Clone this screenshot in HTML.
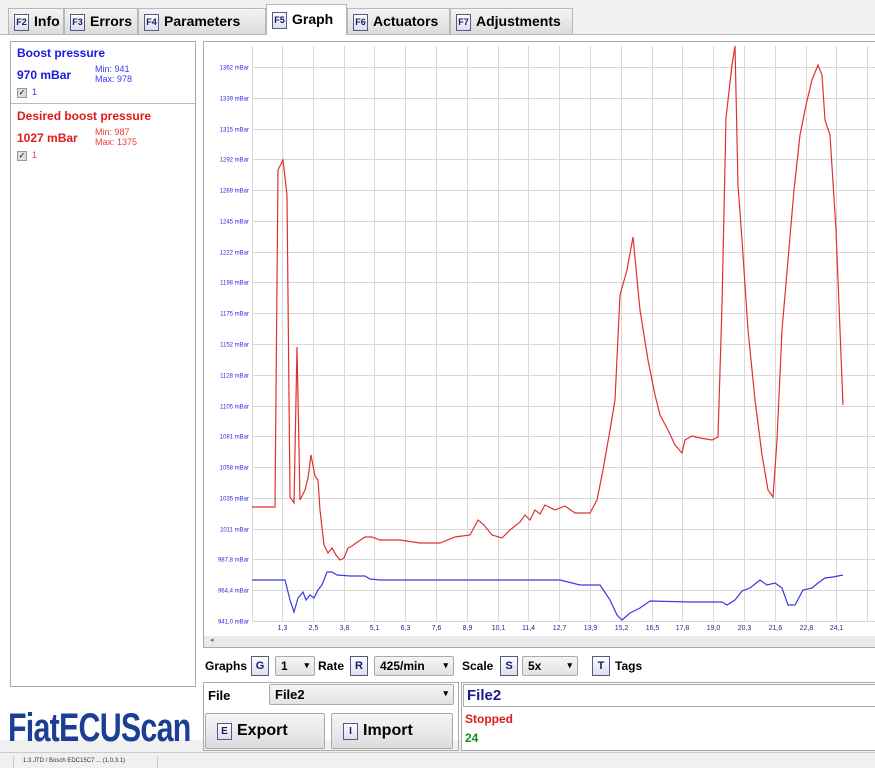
<!DOCTYPE html>
<html><head><meta charset="utf-8"><style>
*{box-sizing:border-box}
body{margin:0;width:875px;height:768px;overflow:hidden;background:#f0f0f0;font-family:"Liberation Sans",Arial,sans-serif;position:relative}
.a{position:absolute}
.tab{position:absolute;top:8px;height:26px;border:1px solid #b8b8b8;border-bottom:none;background:linear-gradient(#f4f4f4,#dcdcdc);font-weight:bold;font-size:14px;padding:4px 0 0 5px;white-space:nowrap;overflow:hidden}
.k{display:inline-block;border:1px solid #555a80;background:linear-gradient(#fff,#dde);color:#1a1a6a;font-size:9px;font-weight:bold;width:15px;height:17px;text-align:center;line-height:15px;margin-right:5px;vertical-align:1px}
.btn{position:absolute;border:1px solid #aaa;border-radius:2px;background:linear-gradient(#f6f6f6,#dcdcdc);font-weight:bold}
.sel{position:absolute;border:1px solid #aaa;border-radius:2px;background:linear-gradient(#f6f6f6,#e2e2e2);font-size:12px;font-weight:bold;padding:2px 5px}
.sel:after{content:"▾";position:absolute;right:5px;top:3px;font-size:9px}
.lbl{position:absolute;font-size:12px;font-weight:bold}
</style></head><body>
<div class="a" style="left:0;top:34px;width:875px;height:706px;background:#fff;border-top:1px solid #b8b8b8"></div>
<div class="tab" style="left:8px;width:56px"><span class="k">F2</span>Info</div>
<div class="tab" style="left:64px;width:74px"><span class="k">F3</span>Errors</div>
<div class="tab" style="left:138px;width:128px"><span class="k">F4</span>Parameters</div>
<div class="tab" style="left:266px;top:4px;height:31px;width:81px;background:#fff;padding-top:6px"><span class="k">F5</span>Graph</div>
<div class="tab" style="left:347px;width:103px"><span class="k">F6</span>Actuators</div>
<div class="tab" style="left:450px;width:123px"><span class="k">F7</span>Adjustments</div>

<div class="a" style="left:10px;top:41px;width:186px;height:646px;border:1px solid #aaa;background:#fff"></div>
<div class="a" style="left:11px;top:103px;width:184px;border-top:1px solid #bbb"></div>
<div class="a" style="left:17px;top:46px;color:#1a1ae0;font-weight:bold;font-size:12px">Boost pressure</div>
<div class="a" style="left:17px;top:68px;color:#1a1ae0;font-weight:bold;font-size:12px">970 mBar</div>
<div class="a" style="left:95px;top:64px;color:#3a3af0;font-size:9px;line-height:10px">Min: 941<br>Max: 978</div>
<div class="a" style="left:17px;top:88px;width:10px;height:10px;border:1px solid #999;background:#ddd;font-size:8px;line-height:8px;text-align:center">✓</div>
<div class="a" style="left:32px;top:87px;color:#3a3af0;font-size:9px">1</div>
<div class="a" style="left:17px;top:109px;color:#e01a1a;font-weight:bold;font-size:12px">Desired boost pressure</div>
<div class="a" style="left:17px;top:131px;color:#e01a1a;font-weight:bold;font-size:12px">1027 mBar</div>
<div class="a" style="left:95px;top:127px;color:#f03a3a;font-size:9px;line-height:10px">Min: 987<br>Max: 1375</div>
<div class="a" style="left:17px;top:151px;width:10px;height:10px;border:1px solid #999;background:#ddd;font-size:8px;line-height:8px;text-align:center">✓</div>
<div class="a" style="left:32px;top:150px;color:#f03a3a;font-size:9px">1</div>

<div class="a" style="left:8px;top:706px;width:240px;color:#1c3f94;font-weight:bold;font-size:40px;letter-spacing:-1px;transform:scaleX(0.76);transform-origin:left;white-space:nowrap">FiatECUScan</div>

<div class="a" style="left:203px;top:41px;width:680px;height:607px;border:1px solid #aaa;background:#fff"></div>
<svg class="a" style="left:0;top:0" width="875" height="768">
<g id="grid"></g>
<polyline fill="none" stroke="#e03030" stroke-width="1.2" points="252,507 275,507 278,170 283,160 287,195 290,497 294,503 297,347 300,500 305,490 308,478 311,455 315,476 318,480 320,510 324,545 328,553 332,548 336,555 340,560 344,558 348,548 352,546 356,543 365,537 372,537 380,540 400,540 420,543 440,543 455,537 470,535 478,520 484,525 492,535 502,538 510,530 520,522 525,515 530,520 535,510 540,514 545,505 555,510 565,506 575,513 590,513 597,500 603,470 610,430 615,400 620,295 627,270 633,237 640,310 648,360 655,395 660,415 668,430 675,445 682,453 685,440 692,436 700,438 712,440 718,437 722,305 726,118 732,65 735,46 738,185 742,240 748,330 755,400 762,455 768,490 773,497 777,440 782,330 788,260 794,190 800,135 806,105 812,80 818,65 822,75 825,120 830,135 836,230 840,330 843,405"/>
<polyline fill="none" stroke="#3a3ae0" stroke-width="1.2" points="252,580 285,580 290,600 294,612 298,598 303,592 306,600 310,595 314,598 318,590 322,585 327,572 332,572 337,575 350,576 365,576 370,579 380,580 440,580 560,580 580,585 600,585 610,600 617,615 622,620 630,613 640,608 650,601 690,602 722,602 727,605 735,600 742,591 750,588 755,584 760,580 767,585 775,583 782,588 788,605 795,605 803,590 812,588 818,583 825,578 833,577 843,575"/>
</svg>
<div class="a" style="left:204px;top:636px;width:671px;height:11px;background:#eaeaea;font-size:7px;color:#666;padding-left:6px">◂</div>

<div class="lbl" style="left:205px;top:659px">Graphs</div>
<div class="a k" style="left:251px;top:656px;width:18px;height:20px;line-height:18px;font-size:11px">G</div>
<div class="sel" style="left:275px;top:656px;width:40px;height:20px">1</div>
<div class="lbl" style="left:318px;top:659px">Rate</div>
<div class="a k" style="left:350px;top:656px;width:18px;height:20px;line-height:18px;font-size:11px">R</div>
<div class="sel" style="left:374px;top:656px;width:80px;height:20px">425/min</div>
<div class="lbl" style="left:462px;top:659px">Scale</div>
<div class="a k" style="left:500px;top:656px;width:18px;height:20px;line-height:18px;font-size:11px">S</div>
<div class="sel" style="left:522px;top:656px;width:56px;height:20px">5x</div>
<div class="a k" style="left:592px;top:656px;width:18px;height:20px;line-height:18px;font-size:11px">T</div>
<div class="lbl" style="left:615px;top:659px">Tags</div>

<div class="a" style="left:203px;top:682px;width:256px;height:69px;border:1px solid #aaa"></div>
<div class="lbl" style="left:208px;top:688px;font-size:13px">File</div>
<div class="sel" style="left:269px;top:684px;width:185px;height:21px;font-size:13px">File2</div>
<div class="btn" style="left:205px;top:713px;width:120px;height:36px;font-size:16px;padding:8px 0 0 11px"><span class="k" style="font-size:10px">E</span>Export</div>
<div class="btn" style="left:331px;top:713px;width:122px;height:36px;font-size:16px;padding:8px 0 0 11px"><span class="k" style="font-size:10px">I</span>Import</div>
<div class="a" style="left:461px;top:682px;width:420px;height:69px;border:1px solid #aaa;background:#fff"></div>
<div class="a" style="left:463px;top:684px;width:420px;height:23px;border:1px solid #aaa;color:#1a1a8a;font-weight:bold;font-size:15px;padding:2px 3px">File2</div>
<div class="lbl" style="left:465px;top:712px;color:#e01a1a">Stopped</div>
<div class="lbl" style="left:465px;top:731px;color:#1a8a1a">24</div>

<div class="a" style="left:0;top:752px;width:875px;height:16px;background:#f0f0f0;border-top:1px solid #ccc"></div>
<div class="a" style="left:13px;top:756px;width:145px;height:12px;border-left:1px solid #ccc;border-right:1px solid #ccc;font-size:6px;color:#333;padding:2px 0 0 9px;white-space:nowrap;overflow:hidden">1.3 JTD / Bosch EDC15C7 ... (1.0.3.1)</div>

<script>
var ns='http://www.w3.org/2000/svg',g=document.getElementById('grid');
function el(t,a){var e=document.createElementNS(ns,t);for(var k in a)e.setAttribute(k,a[k]);return e}
g.appendChild(el('line',{x1:252.5,x2:252.5,y1:46,y2:621,stroke:'#d8d8d8'}));
var ys=["1362 mBar","1339 mBar","1315 mBar","1292 mBar","1269 mBar","1245 mBar","1222 mBar","1198 mBar","1175 mBar","1152 mBar","1128 mBar","1105 mBar","1081 mBar","1058 mBar","1035 mBar","1011 mBar","987,8 mBar","964,4 mBar","941,0 mBar"];
for(var i=0;i<19;i++){var y=Math.round(67+i*30.78)+.5;g.appendChild(el('line',{x1:252,x2:875,y1:y,y2:y,stroke:'#d8d8d8'}));var t=el('text',{x:249,y:y+2,'text-anchor':'end','font-size':'6','fill':'#2a2ae0','font-family':'Liberation Sans'});t.textContent=ys[i];g.appendChild(t)}
var xs=["1,3","2,5","3,8","5,1","6,3","7,6","8,9","10,1","11,4","12,7","13,9","15,2","16,5","17,8","19,0","20,3","21,6","22,8","24,1"];
for(var i=0;i<20;i++){var x=Math.round(282+i*30.8)+.5;g.appendChild(el('line',{x1:x,x2:x,y1:46,y2:621,stroke:'#d8d8d8'}));if(i<19){var t=el('text',{x:x,y:630,'text-anchor':'middle','font-size':'7','fill':'#2a2a8a','font-family':'Liberation Sans'});t.textContent=xs[i];g.appendChild(t)}}
</script>
</body></html>
